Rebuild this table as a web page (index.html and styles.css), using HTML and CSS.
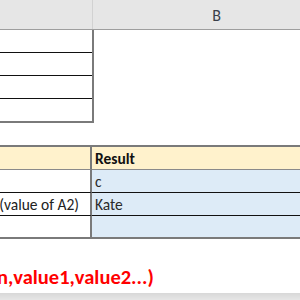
FILE: index.html
```html
<!DOCTYPE html>
<html>
<head>
<meta charset="utf-8">
<link rel="stylesheet" href="styles.css">
</head>
<body>
<div class="sheet">
  <div class="colhead">
    <div class="ch ch-a"></div>
    <div class="ch ch-b">B</div>
  </div>
  <div class="toptable">
    <div class="tcell"></div>
    <div class="tcell"></div>
    <div class="tcell"></div>
    <div class="tcell last"></div>
  </div>
  <div class="gap"></div>
  <div class="grid">
    <div class="c a head"></div>
    <div class="c b head bold">Result</div>
    <div class="c a"></div>
    <div class="c b val">c</div>
    <div class="c a right">(value of A2)</div>
    <div class="c b val">Kate</div>
    <div class="c a lastrow"></div>
    <div class="c b val lastrow"></div>
  </div>
  <div class="formula">n,value1,value2...)</div>
  <div class="band"></div>
</div>
</body>
</html>
```

FILE: styles.css
```css
html, body {
  margin: 0;
  padding: 0;
  background: #fff;
  overflow: hidden;
}
.sheet {
  width: 300px;
  height: 300px;
  overflow: hidden;
  font-family: Carlito, "Liberation Sans", Arial, sans-serif;
  font-size: 15.5px;
  color: #222;
  display: flex;
  flex-direction: column;
}
.colhead {
  display: grid;
  grid-template-columns: 93px 1fr;
  height: 29px;
  background: #e6e6e6;
  border-bottom: 1px solid #9e9e9e;
  width: 340px;
  flex: none;
}
.ch-a {
  border-right: 1px solid #d2d2d2;
}
.ch-b {
  display: flex;
  align-items: center;
  justify-content: center;
  font-size: 16px;
  color: #3a3f4a;
  padding-top: 2px;
}
.toptable {
  width: 92px;
  border-right: 2px solid #7a7a7a;
  border-bottom: 2px solid #7a7a7a;
  flex: none;
}
.tcell {
  height: 22px;
  border-bottom: 1px solid #111;
}
.tcell.last {
  height: 22px;
  border-bottom: none;
}
.gap {
  height: 22px;
  flex: none;
}
.grid {
  display: grid;
  grid-template-columns: 92px 246px;
  border-top: 2px solid #7a7a7a;
  flex: none;
}
.c {
  height: 22px;
  border-bottom: 1px solid #111;
  display: flex;
  align-items: center;
  white-space: nowrap;
}
.a {
  border-right: 2px solid #7a7a7a;
}
.b {
  padding-left: 3px;
  background: #ddebf7;
}
.head {
  background: #fff2cc;
  border-bottom: 1px solid #8a8a8a;
}
.bold {
  font-weight: bold;
  color: #111;
}
.val {
  color: #2b2b2b;
}
.right {
  justify-content: flex-end;
  padding-right: 11px;
  overflow: hidden;
}
.lastrow {
  border-bottom: 2px solid #7a7a7a;
  height: 21px;
}
.formula {
  margin-top: 26px;
  margin-left: -3px;
  color: #ff0000;
  font-weight: bold;
  font-size: 20.5px;
  line-height: 24px;
  white-space: nowrap;
  flex: none;
}
.band {
  margin-top: 4px;
  height: 8px;
  background: linear-gradient(#d8d8d8, #e8e8e8);
  flex: none;
}
```
